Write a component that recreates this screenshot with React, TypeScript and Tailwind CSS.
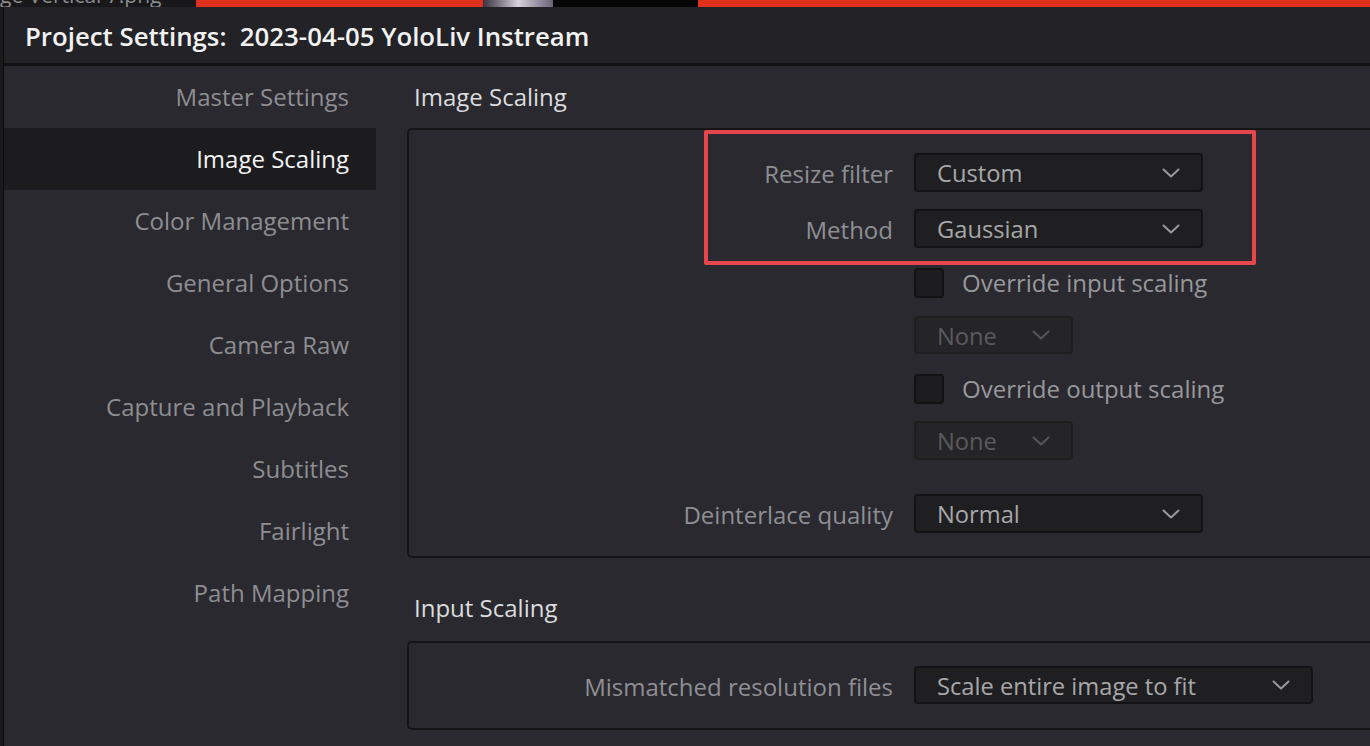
import React from "react";

const sidebarItems = [
  "Master Settings",
  "Image Scaling",
  "Color Management",
  "General Options",
  "Camera Raw",
  "Capture and Playback",
  "Subtitles",
  "Fairlight",
  "Path Mapping",
];

const Chevron = ({ disabled }: { disabled?: boolean }) => (
  <svg
    width="18"
    height="10"
    viewBox="0 0 18 10"
    fill="none"
    className={disabled ? "text-[#55555a]" : "text-[#9a9a9d]"}
  >
    <path
      d="M1.5 1.5 L9 8.5 L16.5 1.5"
      stroke="currentColor"
      strokeWidth="2"
      strokeLinecap="round"
      strokeLinejoin="round"
    />
  </svg>
);

const Dropdown = ({
  value,
  width,
  disabled,
  height = "h-[39px]",
}: {
  value: string;
  width: string;
  disabled?: boolean;
  height?: string;
}) => (
  <div
    className={`${width} ${height} flex items-center justify-between pl-[21px] pr-[21px] rounded-[4px] border-2 ${
      disabled
        ? "bg-[#252528] border-[#1e1e21] text-[#5a5a5e]"
        : "bg-[#1f1f21] border-[#131315] text-[#a7a7aa]"
    } text-[23.7px] leading-none`}
  >
    <span className="pt-[3px]">{value}</span>
    <Chevron disabled={disabled} />
  </div>
);

const Label = ({ children }: { children: React.ReactNode }) => (
  <div className="w-[505px] pr-[21px] pt-[3px] text-right text-[24px] text-[#8f8f93] leading-none whitespace-nowrap">
    {children}
  </div>
);

const Checkbox = ({ label }: { label: string }) => (
  <div className="flex items-center h-[40px]">
    <div className="w-[505px]" />
    <div className="w-[30px] h-[30px] rounded-[4px] bg-[#1d1d1f] border-2 border-[#121214]" />
    <span className="ml-[18px] text-[24px] text-[#98989b] leading-none">
      {label}
    </span>
  </div>
);

export default function App() {
  return (
    <div className="w-[1370px] h-[746px] overflow-hidden flex flex-col bg-[#161617] font-['Open_Sans',sans-serif]">
      {/* app behind the dialog */}
      <div className="h-[7px] flex shrink-0 overflow-hidden">
        <div className="w-[196px] bg-[#18181a] overflow-hidden">
          <div className="-mt-[17px] text-[21px] text-[#8a8a8c] leading-[24px] whitespace-nowrap">
            ge Vertical 7.png
          </div>
        </div>
        <div className="w-[287px] bg-[#e0311f]" />
        <div className="w-[70px] bg-gradient-to-r from-[#3a3342] via-[#d8d4dc] to-[#6a6478]" />
        <div className="w-[145px] bg-[#050505]" />
        <div className="flex-1 bg-[#e0311f]" />
      </div>

      <div className="flex-1 flex">
        <div className="w-[3px] bg-[#1a1a1b]" />
        <div className="flex-1 flex flex-col border-l border-[#0c0c0d]">
          {/* title bar */}
          <div className="h-[59px] shrink-0 flex items-center pl-[21px] pt-[3px] bg-[#222227] border-b-[3px] border-[#121214]">
            <span className="text-[25.8px] font-semibold text-[#f2f2f2] whitespace-pre">
              Project Settings:  2023-04-05 YoloLiv Instream
            </span>
          </div>

          {/* body */}
          <div className="flex-1 flex bg-[#29292f]">
            {/* sidebar */}
            <div className="w-[372px] shrink-0 flex flex-col">
              {sidebarItems.map((item) => {
                const active = item === "Image Scaling";
                return (
                  <div
                    key={item}
                    className={`h-[62px] flex items-center justify-end pr-[27px] text-[24px] ${
                      active
                        ? "bg-[#1c1c1f] text-[#f4f4f4]"
                        : "text-[#8e8e92]"
                    }`}
                  >
                    {item}
                  </div>
                );
              })}
            </div>

            {/* content */}
            <div className="flex-1 flex flex-col pl-[31px]">
              <div className="h-[62px] flex items-center pl-[7px] text-[24px] text-[#dcdcde]">
                Image Scaling
              </div>

              <div className="relative h-[430px] border-2 border-r-0 border-[#151517] rounded-l-[5px] flex flex-col pt-[23px]">
                <div className="flex items-center">
                  <Label>Resize filter</Label>
                  <Dropdown value="Custom" width="w-[289px]" />
                </div>
                <div className="flex items-center mt-[17px]">
                  <Label>Method</Label>
                  <Dropdown value="Gaussian" width="w-[289px]" />
                </div>
                <div className="mt-[15px]">
                  <Checkbox label="Override input scaling" />
                </div>
                <div className="flex items-center mt-[13px]">
                  <div className="w-[505px]" />
                  <Dropdown value="None" width="w-[159px]" height="h-[38px]" disabled />
                </div>
                <div className="mt-[15px]">
                  <Checkbox label="Override output scaling" />
                </div>
                <div className="flex items-center mt-[12px]">
                  <div className="w-[505px]" />
                  <Dropdown value="None" width="w-[159px]" disabled />
                </div>
                <div className="flex items-center mt-[34px]">
                  <Label>Deinterlace quality</Label>
                  <Dropdown value="Normal" width="w-[289px]" />
                </div>

                {/* annotation highlight */}
                <div className="absolute left-[295px] top-0 w-[552px] h-[135px] border-4 border-[#e5474c] rounded-[2px] pointer-events-none" />
              </div>

              <div className="h-[83px] flex items-end pb-[15px] pl-[7px] text-[24px] text-[#dcdcde]">
                Input Scaling
              </div>

              <div className="h-[89px] border-2 border-r-0 border-[#151517] rounded-l-[5px] flex flex-col pt-[23px]">
                <div className="flex items-center">
                  <Label>Mismatched resolution files</Label>
                  <Dropdown
                    value="Scale entire image to fit"
                    width="w-[399px]"
                    height="h-[38px]"
                  />
                </div>
              </div>
            </div>
          </div>
        </div>
      </div>
    </div>
  );
}
